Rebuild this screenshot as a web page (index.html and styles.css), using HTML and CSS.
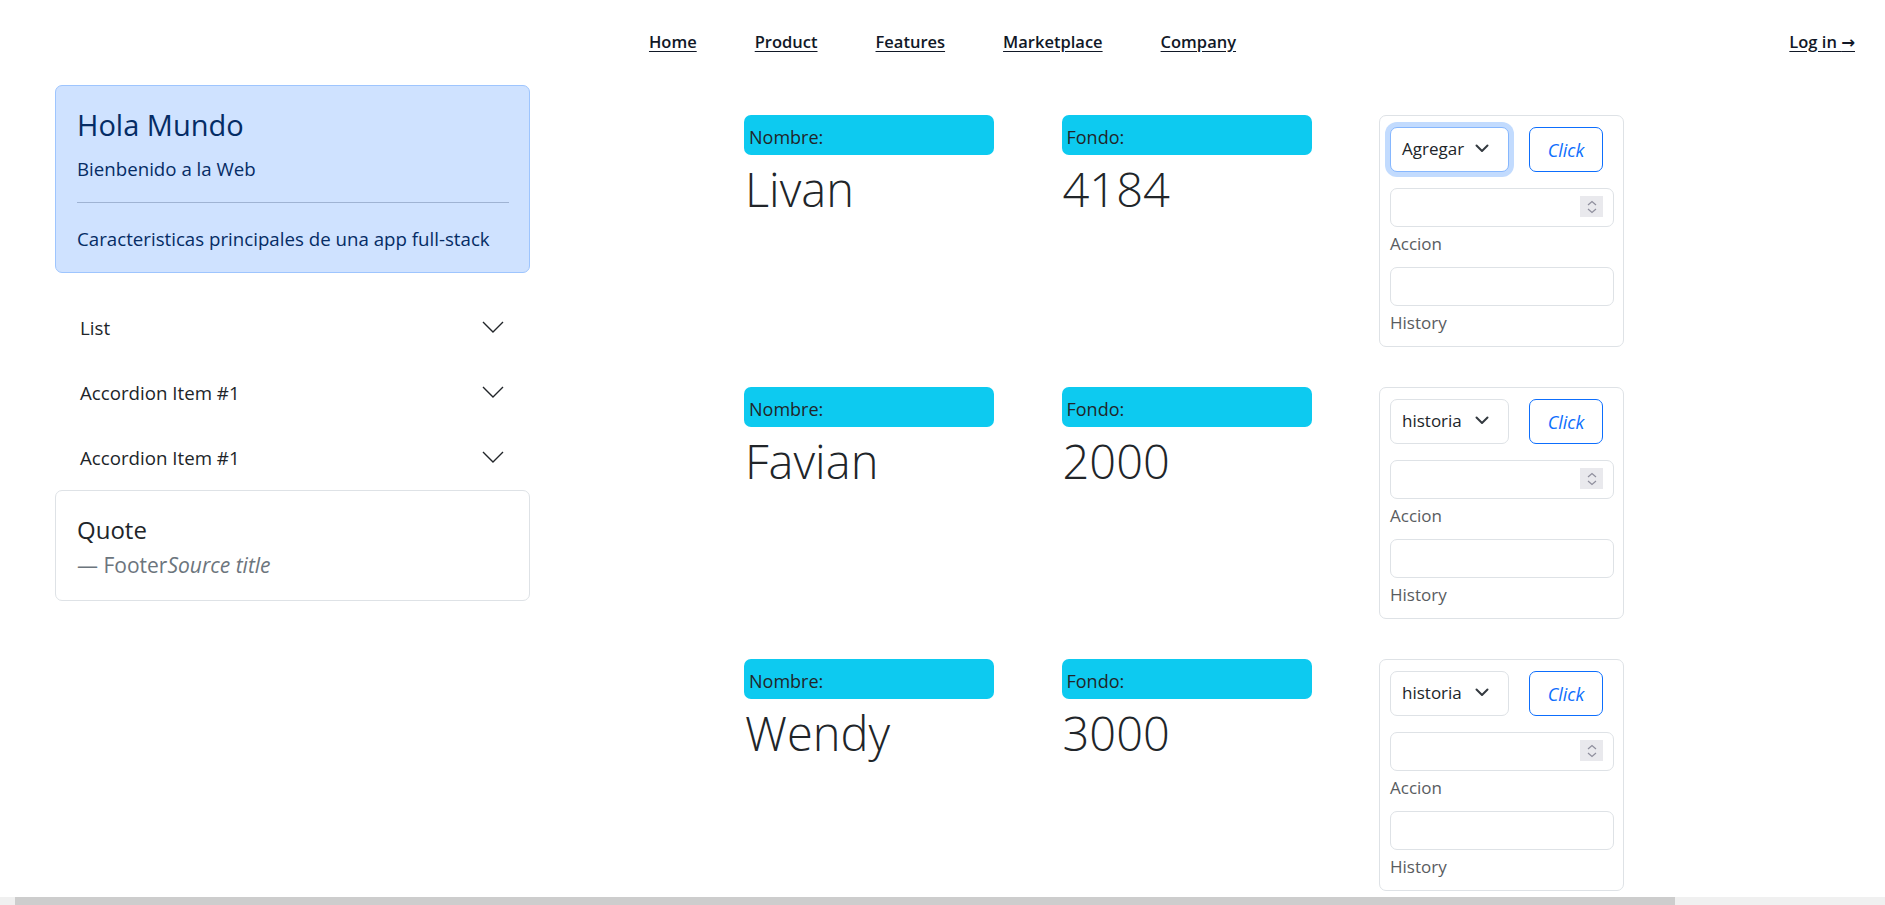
FILE: index.html
```html
<!DOCTYPE html>
<html lang="es">
<head>
<meta charset="utf-8">
<title>Hola Mundo</title>
<link rel="stylesheet" href="styles.css">
</head>
<body>
<header class="topbar">
  <div class="topbar-side"></div>
  <nav class="mainnav">
    <a href="#">Home</a>
    <a href="#">Product</a>
    <a href="#">Features</a>
    <a href="#">Marketplace</a>
    <a href="#">Company</a>
  </nav>
  <div class="topbar-side topbar-right">
    <a href="#" class="login">Log in <span aria-hidden="true">→</span></a>
  </div>
</header>

<div class="layout">
  <aside class="sidebar">
    <div class="alert">
      <h4 class="alert-title">Hola Mundo</h4>
      <p class="alert-text">Bienbenido a la Web</p>
      <hr class="alert-rule">
      <p class="alert-text">Caracteristicas principales de una app full-stack</p>
    </div>

    <div class="accordion">
      <button class="acc-item"><span>List</span>
        <svg class="acc-chev" width="22" height="12" viewBox="0 0 22 12"><polyline points="1,1 11,11 21,1" fill="none" stroke="#212529" stroke-width="1.4"/></svg>
      </button>
      <button class="acc-item"><span>Accordion Item #1</span>
        <svg class="acc-chev" width="22" height="12" viewBox="0 0 22 12"><polyline points="1,1 11,11 21,1" fill="none" stroke="#212529" stroke-width="1.4"/></svg>
      </button>
      <button class="acc-item"><span>Accordion Item #1</span>
        <svg class="acc-chev" width="22" height="12" viewBox="0 0 22 12"><polyline points="1,1 11,11 21,1" fill="none" stroke="#212529" stroke-width="1.4"/></svg>
      </button>
    </div>

    <div class="quote-card">
      <h5 class="quote-title">Quote</h5>
      <footer class="quote-footer">Footer<cite>Source title</cite></footer>
    </div>
  </aside>

  <main class="accounts">
    <section class="acct-row">
      <div class="field">
        <div class="tag">Nombre:</div>
        <div class="big">Livan</div>
      </div>
      <div class="field">
        <div class="tag">Fondo:</div>
        <div class="big">4184</div>
      </div>
      <div class="panel">
        <div class="panel-top">
          <button class="select is-focused"><span>Agregar</span>
            <svg width="14" height="9" viewBox="0 0 14 9"><polyline points="1.5,1.5 7,7 12.5,1.5" fill="none" stroke="#343a40" stroke-width="2" stroke-linecap="round" stroke-linejoin="round"/></svg>
          </button>
          <button class="btn-click">Click</button>
        </div>
        <div class="num-wrap">
          <input class="input" type="text" aria-label="Accion">
          <span class="spin"><svg width="12" height="16" viewBox="0 0 12 16"><polyline points="2,6 6,2.5 10,6" fill="none" stroke="#8f8f9d" stroke-width="1.2"/><polyline points="2,10 6,13.5 10,10" fill="none" stroke="#8f8f9d" stroke-width="1.2"/></svg></span>
        </div>
        <div class="hint">Accion</div>
        <input class="input input-text" type="text" aria-label="History">
        <div class="hint">History</div>
      </div>
    </section>

    <section class="acct-row">
      <div class="field">
        <div class="tag">Nombre:</div>
        <div class="big">Favian</div>
      </div>
      <div class="field">
        <div class="tag">Fondo:</div>
        <div class="big">2000</div>
      </div>
      <div class="panel">
        <div class="panel-top">
          <button class="select"><span>historia</span>
            <svg width="14" height="9" viewBox="0 0 14 9"><polyline points="1.5,1.5 7,7 12.5,1.5" fill="none" stroke="#343a40" stroke-width="2" stroke-linecap="round" stroke-linejoin="round"/></svg>
          </button>
          <button class="btn-click">Click</button>
        </div>
        <div class="num-wrap">
          <input class="input" type="text" aria-label="Accion">
          <span class="spin"><svg width="12" height="16" viewBox="0 0 12 16"><polyline points="2,6 6,2.5 10,6" fill="none" stroke="#8f8f9d" stroke-width="1.2"/><polyline points="2,10 6,13.5 10,10" fill="none" stroke="#8f8f9d" stroke-width="1.2"/></svg></span>
        </div>
        <div class="hint">Accion</div>
        <input class="input input-text" type="text" aria-label="History">
        <div class="hint">History</div>
      </div>
    </section>

    <section class="acct-row">
      <div class="field">
        <div class="tag">Nombre:</div>
        <div class="big">Wendy</div>
      </div>
      <div class="field">
        <div class="tag">Fondo:</div>
        <div class="big">3000</div>
      </div>
      <div class="panel">
        <div class="panel-top">
          <button class="select"><span>historia</span>
            <svg width="14" height="9" viewBox="0 0 14 9"><polyline points="1.5,1.5 7,7 12.5,1.5" fill="none" stroke="#343a40" stroke-width="2" stroke-linecap="round" stroke-linejoin="round"/></svg>
          </button>
          <button class="btn-click">Click</button>
        </div>
        <div class="num-wrap">
          <input class="input" type="text" aria-label="Accion">
          <span class="spin"><svg width="12" height="16" viewBox="0 0 12 16"><polyline points="2,6 6,2.5 10,6" fill="none" stroke="#8f8f9d" stroke-width="1.2"/><polyline points="2,10 6,13.5 10,10" fill="none" stroke="#8f8f9d" stroke-width="1.2"/></svg></span>
        </div>
        <div class="hint">Accion</div>
        <input class="input input-text" type="text" aria-label="History">
        <div class="hint">History</div>
      </div>
    </section>
  </main>
</div>

<div class="hscroll"><div class="hscroll-thumb"></div></div>
</body>
</html>
```

FILE: styles.css
```css
* { box-sizing: border-box; }

html, body {
  margin: 0;
  padding: 0;
  background: #fff;
}

body {
  font-family: "Open Sans", "Noto Sans", "DejaVu Sans", sans-serif;
  font-size: 18.7px;
  color: #212529;
  overflow: hidden;
}

/* ---------- top bar ---------- */
.topbar {
  height: 82px;
  display: grid;
  grid-template-columns: 1fr auto 1fr;
  align-items: center;
  padding: 0 30px;
}

.mainnav {
  display: flex;
  gap: 58px;
}

.mainnav a,
.login {
  color: #111827;
  font-size: 16.5px;
  font-weight: 600;
  text-decoration: underline;
  text-underline-offset: 3px;
}

.topbar-right {
  display: flex;
  justify-content: flex-end;
}

/* ---------- layout ---------- */
.layout {
  display: flex;
  align-items: flex-start;
  padding-left: 55px;
}

.sidebar {
  width: 475px;
  flex: none;
  margin-top: 3px;
}

.accounts {
  margin-left: 214px;
  padding-top: 33px;
  display: flex;
  flex-direction: column;
  gap: 40px;
}

/* ---------- alert ---------- */
.alert {
  background: #cfe2ff;
  border: 1px solid #9ec5fe;
  border-radius: 7px;
  color: #052c65;
  padding: 21px 20px 19px 21px;
}

.alert-title {
  margin: 0 0 11px;
  font-size: 29px;
  font-weight: 400;
  line-height: 36px;
}

.alert-text {
  margin: 0;
  font-size: 18.7px;
  line-height: 29px;
}

.alert-rule {
  margin: 19px 0 21px;
  border: 0;
  border-top: 1px solid #9fb3d3;
  height: 0;
}

/* ---------- accordion ---------- */
.accordion {
  margin-top: 22px;
}

.acc-item {
  width: 100%;
  height: 65px;
  display: flex;
  align-items: center;
  justify-content: space-between;
  padding: 0 26px 0 25px;
  border: 0;
  background: transparent;
  font: inherit;
  font-size: 18.7px;
  color: #212529;
  text-align: left;
}

.acc-chev {
  display: block;
  margin-top: -2px;
}

/* ---------- quote card ---------- */
.quote-card {
  border: 1px solid #dee2e6;
  border-radius: 7px;
  padding: 23px 20px 20px 21px;
}

.quote-title {
  margin: 0 0 5px;
  font-size: 24px;
  font-weight: 400;
  line-height: 31px;
}

.quote-footer {
  color: #6c757d;
  font-size: 21px;
  line-height: 30px;
}

.quote-footer::before {
  content: "\2014\00A0";
}

.quote-footer cite {
  font-style: italic;
}

/* ---------- account rows ---------- */
.acct-row {
  display: grid;
  grid-template-columns: 250px 250px 245px;
  column-gap: 67.5px;
  align-items: start;
}

.tag {
  height: 40px;
  background: #0dcaf0;
  border-radius: 7px;
  padding: 8px 5px 0;
  font-size: 18px;
  line-height: 28px;
  color: #212529;
}

.big {
  margin-top: 4px;
  font-size: 47px;
  font-weight: 300;
  line-height: 60px;
  color: #212529;
  padding-left: 1px;
}

/* ---------- side panel ---------- */
.panel {
  border: 1px solid #dee2e6;
  border-radius: 7px;
  padding: 11px 9px 6px 10px;
}

.panel-top {
  display: flex;
  gap: 20px;
}

.select {
  width: 119px;
  height: 45px;
  display: flex;
  align-items: center;
  justify-content: space-between;
  padding: 0 19px 2px 11px;
  border: 1px solid #dee2e6;
  border-radius: 7px;
  background: #fff;
  font: inherit;
  font-size: 17px;
  color: #212529;
}

.select.is-focused {
  border-color: #86b7fe;
  box-shadow: 0 0 0 5px rgba(13, 110, 253, 0.25);
}

.btn-click {
  width: 74px;
  height: 45px;
  border: 1px solid #0d6efd;
  border-radius: 7px;
  background: #fff;
  color: #0d6efd;
  font: inherit;
  font-size: 18px;
  font-style: italic;
  padding: 1px 0 0;
}

.num-wrap {
  position: relative;
  margin-top: 16px;
}

.input {
  display: block;
  width: 100%;
  height: 39px;
  border: 1px solid #dee2e6;
  border-radius: 7px;
  background: #fff;
  font: inherit;
  outline: none;
}

.input-text {
  margin-top: 6px;
}

.spin {
  position: absolute;
  top: 8px;
  right: 11px;
  width: 23px;
  height: 21px;
  background: #e9e9ed;
  display: flex;
  align-items: center;
  justify-content: center;
}

.spin svg {
  display: block;
}

.hint {
  height: 34px;
  line-height: 34px;
  font-size: 17px;
  color: #595c5f;
}

/* ---------- fake horizontal scrollbar ---------- */
.hscroll {
  position: fixed;
  left: 0;
  right: 0;
  bottom: 0;
  height: 8px;
  background: #f0f0f0;
}

.hscroll-thumb {
  margin-left: 15px;
  width: 1660px;
  height: 8px;
  background: #cdcdcd;
}
```
